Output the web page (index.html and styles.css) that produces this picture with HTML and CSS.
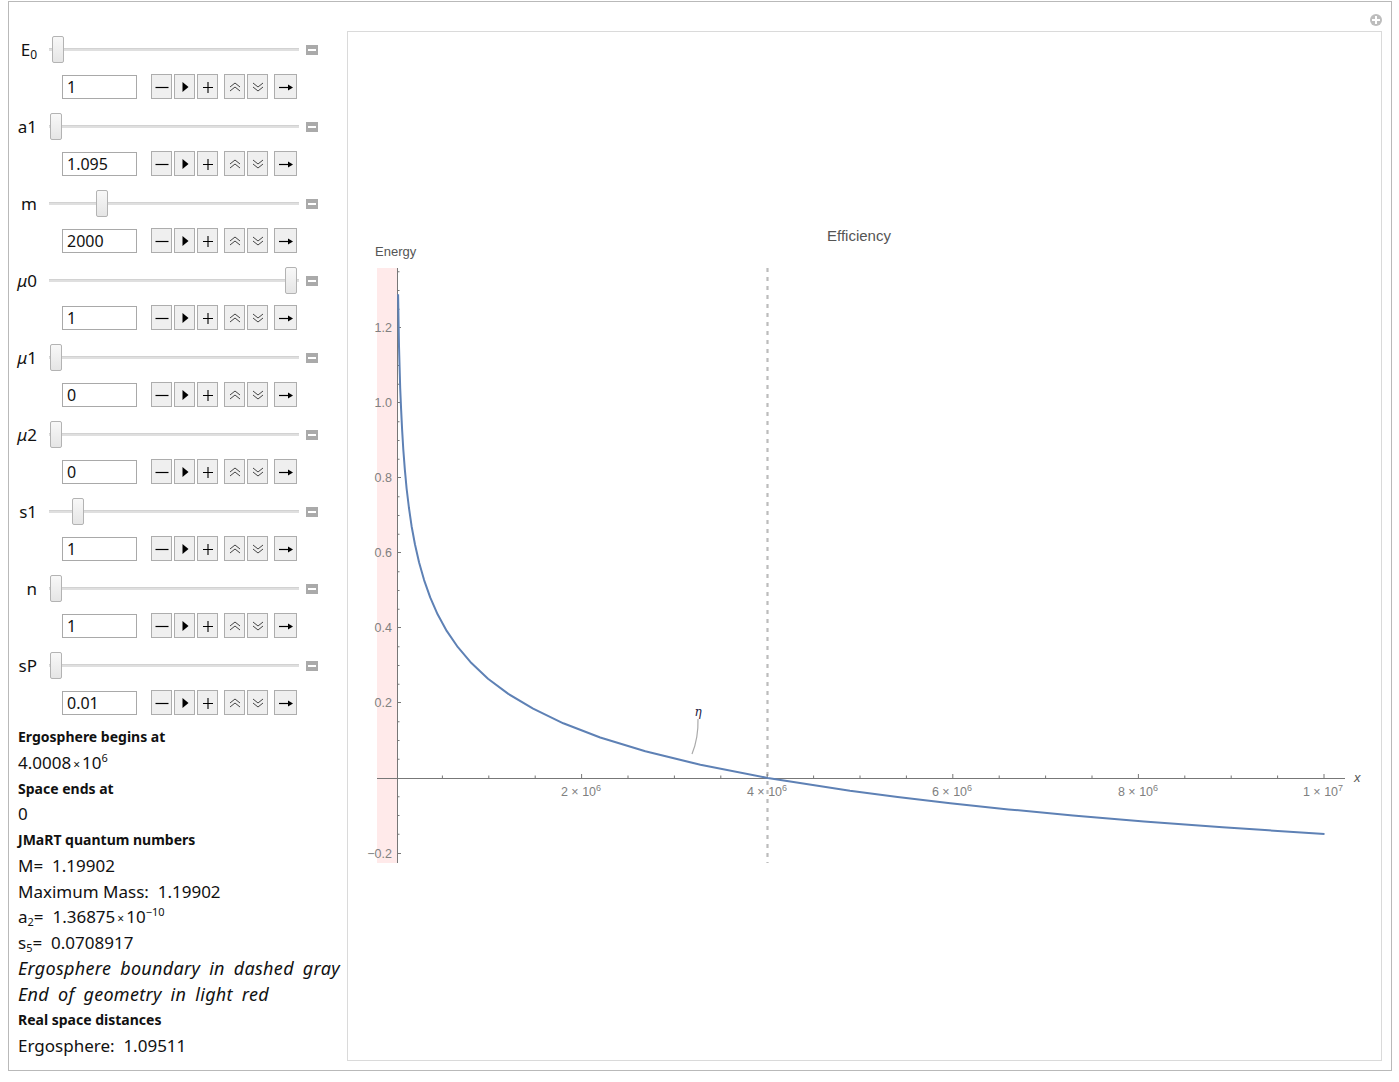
FILE: index.html
```html
<!DOCTYPE html>
<html lang="en">
<head>
  <meta charset="UTF-8" />
  <title>JMaRT Efficiency</title>
  <link rel="stylesheet" href="styles.css">
</head>
<body>
  <!-- button glyphs, drawn once and reused -->
  <svg class="defs" width="0" height="0">
    <symbol id="ic-minus" viewBox="0 0 14 14"><path d="M0.5 7.5h13" stroke="#000" stroke-width="1.2"/></symbol>
    <symbol id="ic-play" viewBox="0 0 14 14"><path d="M4.5 2l6 5-6 5z" fill="#000"/></symbol>
    <symbol id="ic-plus" viewBox="0 0 14 14"><path d="M2 7.5h10M7 2v11" stroke="#000" stroke-width="1.1"/></symbol>
    <symbol id="ic-up" viewBox="0 0 14 14"><path d="M2 7l5-4 5 4M2 11l5-4 5 4" stroke="#444" stroke-width="1" fill="none"/></symbol>
    <symbol id="ic-down" viewBox="0 0 14 14"><path d="M2 3l5 4 5-4M2 7l5 4 5-4" stroke="#444" stroke-width="1" fill="none"/></symbol>
    <symbol id="ic-arrow" viewBox="0 0 14 14"><path d="M0 7.5h10" stroke="#000" stroke-width="1.2"/><path d="M9 4.5l5 3-5 3z" fill="#000"/></symbol>
  </svg>

  <div class="panel">
    <span class="add-btn"></span>

    <div class="sidebar">
      <div class="control">
        <div class="slider-row">
          <span class="label">E<sub>0</sub></span>
          <div class="track"><span class="thumb" style="left: 3px"></span></div>
          <span class="collapse"></span>
        </div>
        <div class="input-row">
          <span class="field">1</span>
          <div class="btn-group">
            <span class="btn"><svg><use href="#ic-minus"/></svg></span>
            <span class="btn"><svg><use href="#ic-play"/></svg></span>
            <span class="btn"><svg><use href="#ic-plus"/></svg></span>
          </div>
          <div class="btn-group">
            <span class="btn"><svg><use href="#ic-up"/></svg></span>
            <span class="btn"><svg><use href="#ic-down"/></svg></span>
          </div>
          <div class="btn-group">
            <span class="btn wide"><svg><use href="#ic-arrow"/></svg></span>
          </div>
        </div>
      </div>

      <div class="control">
        <div class="slider-row">
          <span class="label">a1</span>
          <div class="track"><span class="thumb" style="left: 1px"></span></div>
          <span class="collapse"></span>
        </div>
        <div class="input-row">
          <span class="field">1.095</span>
          <div class="btn-group">
            <span class="btn"><svg><use href="#ic-minus"/></svg></span>
            <span class="btn"><svg><use href="#ic-play"/></svg></span>
            <span class="btn"><svg><use href="#ic-plus"/></svg></span>
          </div>
          <div class="btn-group">
            <span class="btn"><svg><use href="#ic-up"/></svg></span>
            <span class="btn"><svg><use href="#ic-down"/></svg></span>
          </div>
          <div class="btn-group">
            <span class="btn wide"><svg><use href="#ic-arrow"/></svg></span>
          </div>
        </div>
      </div>

      <div class="control">
        <div class="slider-row">
          <span class="label">m</span>
          <div class="track"><span class="thumb" style="left: 47px"></span></div>
          <span class="collapse"></span>
        </div>
        <div class="input-row">
          <span class="field">2000</span>
          <div class="btn-group">
            <span class="btn"><svg><use href="#ic-minus"/></svg></span>
            <span class="btn"><svg><use href="#ic-play"/></svg></span>
            <span class="btn"><svg><use href="#ic-plus"/></svg></span>
          </div>
          <div class="btn-group">
            <span class="btn"><svg><use href="#ic-up"/></svg></span>
            <span class="btn"><svg><use href="#ic-down"/></svg></span>
          </div>
          <div class="btn-group">
            <span class="btn wide"><svg><use href="#ic-arrow"/></svg></span>
          </div>
        </div>
      </div>

      <div class="control">
        <div class="slider-row">
          <span class="label"><i>μ</i>0</span>
          <div class="track"><span class="thumb" style="left: 236px"></span></div>
          <span class="collapse"></span>
        </div>
        <div class="input-row">
          <span class="field">1</span>
          <div class="btn-group">
            <span class="btn"><svg><use href="#ic-minus"/></svg></span>
            <span class="btn"><svg><use href="#ic-play"/></svg></span>
            <span class="btn"><svg><use href="#ic-plus"/></svg></span>
          </div>
          <div class="btn-group">
            <span class="btn"><svg><use href="#ic-up"/></svg></span>
            <span class="btn"><svg><use href="#ic-down"/></svg></span>
          </div>
          <div class="btn-group">
            <span class="btn wide"><svg><use href="#ic-arrow"/></svg></span>
          </div>
        </div>
      </div>

      <div class="control">
        <div class="slider-row">
          <span class="label"><i>μ</i>1</span>
          <div class="track"><span class="thumb" style="left: 1px"></span></div>
          <span class="collapse"></span>
        </div>
        <div class="input-row">
          <span class="field">0</span>
          <div class="btn-group">
            <span class="btn"><svg><use href="#ic-minus"/></svg></span>
            <span class="btn"><svg><use href="#ic-play"/></svg></span>
            <span class="btn"><svg><use href="#ic-plus"/></svg></span>
          </div>
          <div class="btn-group">
            <span class="btn"><svg><use href="#ic-up"/></svg></span>
            <span class="btn"><svg><use href="#ic-down"/></svg></span>
          </div>
          <div class="btn-group">
            <span class="btn wide"><svg><use href="#ic-arrow"/></svg></span>
          </div>
        </div>
      </div>

      <div class="control">
        <div class="slider-row">
          <span class="label"><i>μ</i>2</span>
          <div class="track"><span class="thumb" style="left: 1px"></span></div>
          <span class="collapse"></span>
        </div>
        <div class="input-row">
          <span class="field">0</span>
          <div class="btn-group">
            <span class="btn"><svg><use href="#ic-minus"/></svg></span>
            <span class="btn"><svg><use href="#ic-play"/></svg></span>
            <span class="btn"><svg><use href="#ic-plus"/></svg></span>
          </div>
          <div class="btn-group">
            <span class="btn"><svg><use href="#ic-up"/></svg></span>
            <span class="btn"><svg><use href="#ic-down"/></svg></span>
          </div>
          <div class="btn-group">
            <span class="btn wide"><svg><use href="#ic-arrow"/></svg></span>
          </div>
        </div>
      </div>

      <div class="control">
        <div class="slider-row">
          <span class="label">s1</span>
          <div class="track"><span class="thumb" style="left: 23px"></span></div>
          <span class="collapse"></span>
        </div>
        <div class="input-row">
          <span class="field">1</span>
          <div class="btn-group">
            <span class="btn"><svg><use href="#ic-minus"/></svg></span>
            <span class="btn"><svg><use href="#ic-play"/></svg></span>
            <span class="btn"><svg><use href="#ic-plus"/></svg></span>
          </div>
          <div class="btn-group">
            <span class="btn"><svg><use href="#ic-up"/></svg></span>
            <span class="btn"><svg><use href="#ic-down"/></svg></span>
          </div>
          <div class="btn-group">
            <span class="btn wide"><svg><use href="#ic-arrow"/></svg></span>
          </div>
        </div>
      </div>

      <div class="control">
        <div class="slider-row">
          <span class="label">n</span>
          <div class="track"><span class="thumb" style="left: 1px"></span></div>
          <span class="collapse"></span>
        </div>
        <div class="input-row">
          <span class="field">1</span>
          <div class="btn-group">
            <span class="btn"><svg><use href="#ic-minus"/></svg></span>
            <span class="btn"><svg><use href="#ic-play"/></svg></span>
            <span class="btn"><svg><use href="#ic-plus"/></svg></span>
          </div>
          <div class="btn-group">
            <span class="btn"><svg><use href="#ic-up"/></svg></span>
            <span class="btn"><svg><use href="#ic-down"/></svg></span>
          </div>
          <div class="btn-group">
            <span class="btn wide"><svg><use href="#ic-arrow"/></svg></span>
          </div>
        </div>
      </div>

      <div class="control">
        <div class="slider-row">
          <span class="label">sP</span>
          <div class="track"><span class="thumb" style="left: 1px"></span></div>
          <span class="collapse"></span>
        </div>
        <div class="input-row">
          <span class="field">0.01</span>
          <div class="btn-group">
            <span class="btn"><svg><use href="#ic-minus"/></svg></span>
            <span class="btn"><svg><use href="#ic-play"/></svg></span>
            <span class="btn"><svg><use href="#ic-plus"/></svg></span>
          </div>
          <div class="btn-group">
            <span class="btn"><svg><use href="#ic-up"/></svg></span>
            <span class="btn"><svg><use href="#ic-down"/></svg></span>
          </div>
          <div class="btn-group">
            <span class="btn wide"><svg><use href="#ic-arrow"/></svg></span>
          </div>
        </div>
      </div>

      <div class="readout">
        <div class="head">Ergosphere begins at</div>
        <div class="val">4.0008<span class="times">×</span>10<sup>6</sup></div>
        <div class="head">Space ends at</div>
        <div class="val">0</div>
        <div class="head">JMaRT quantum numbers</div>
        <div class="val">M=&nbsp; 1.19902</div>
        <div class="val">Maximum Mass:&nbsp; 1.19902</div>
        <div class="val">a<sub>2</sub>=&nbsp; 1.36875<span class="times">×</span>10<sup>−10</sup></div>
        <div class="val">s<sub>5</sub>=&nbsp; 0.0708917</div>
        <div class="note">Ergosphere boundary in dashed gray</div>
        <div class="note">End of geometry in light red</div>
        <div class="head">Real space distances</div>
        <div class="val">Ergosphere:&nbsp; 1.09511</div>
      </div>
    </div>

    <div class="plot">
      <!-- viewBox uses page coordinates: x axis 1e6 = 92.8px from x=396.5, y axis 1.0 = 375px from y=778 -->
      <svg width="1033" height="1028" viewBox="348 32 1033 1028">
        <rect x="377" y="268" width="20" height="595" fill="#ffeaea"/>
        <line x1="767.5" y1="268" x2="767.5" y2="863" stroke="#bcbcbc" stroke-width="2.2" stroke-dasharray="4 5"/>

        <g stroke="#777" stroke-width="1" fill="none">
          <path d="M377 778.5H1345"/>
          <path d="M397.5 268V863"/>
          <!-- y ticks -->
          <path d="M397 327.5h4M397 402.5h4M397 477.5h4M397 552.5h4M397 627.5h4M397 702.5h4M397 853.5h4"/>
          <path d="M397 271.75h2.5M397 290.5h2.5M397 309.25h2.5M397 346.75h2.5M397 365.5h2.5M397 384.25h2.5M397 421.75h2.5M397 440.5h2.5M397 459.25h2.5M397 496.75h2.5M397 515.5h2.5M397 534.25h2.5M397 571.75h2.5M397 590.5h2.5M397 609.25h2.5M397 646.75h2.5M397 665.5h2.5M397 684.25h2.5M397 721.75h2.5M397 740.5h2.5M397 759.25h2.5M397 796.75h2.5M397 815.5h2.5M397 834.25h2.5"/>
          <!-- x ticks -->
          <path d="M581.6 778v-4M767.2 778v-4M952.8 778v-4M1138.4 778v-4M1324 778v-4"/>
          <path d="M442.4 778v-2.5M488.8 778v-2.5M535.2 778v-2.5M628 778v-2.5M674.4 778v-2.5M720.8 778v-2.5M813.6 778v-2.5M860 778v-2.5M906.4 778v-2.5M999.2 778v-2.5M1045.6 778v-2.5M1092 778v-2.5M1184.8 778v-2.5M1231.2 778v-2.5M1277.6 778v-2.5"/>
        </g>

        <!-- efficiency curve, sampled along u = ln(4e6 / x) -->
        <path class="curve" d="M398.1 294.3L398.6 324.2L399 345.9L399.6 367.3L400.2 388.4L401.1 409.1L402.1 429.5L403.3 449.5L404.8 469.2L406.6 488.5L408.9 507.5L411.6 526.2L415 544.5L419.1 562.5L424.1 580.1L430.2 597.4L437.6 614.3L446.7 630.9L457.9 647.2L471.4 663.1L488 678.7L508.3 693.9L533.1 708.7L563.3 723.3L600.2 737.5L645.3 751.3L700.4 764.8L767.7 778L849.9 790.8L897.6 797.1L950.3 803.3L1008.5 809.4L1072.9 815.4L1144 821.4L1222.6 827.2L1264.8 830.1L1324.5 833.9"/>

        <path d="M698 719Q698.5 738 692 754" stroke="#aaa" stroke-width="1.2" fill="none"/>
        <text class="eta" x="698" y="716" text-anchor="middle">η</text>

        <g class="ticks">
          <text x="392" y="331.5" text-anchor="end">1.2</text>
          <text x="392" y="406.5" text-anchor="end">1.0</text>
          <text x="392" y="481.5" text-anchor="end">0.8</text>
          <text x="392" y="556.5" text-anchor="end">0.6</text>
          <text x="392" y="631.5" text-anchor="end">0.4</text>
          <text x="392" y="706.5" text-anchor="end">0.2</text>
          <text x="392" y="857.5" text-anchor="end">−0.2</text>

          <text x="581" y="796" text-anchor="middle">2 × 10<tspan class="exp" dy="-5">6</tspan></text>
          <text x="767" y="796" text-anchor="middle">4 × 10<tspan class="exp" dy="-5">6</tspan></text>
          <text x="952" y="796" text-anchor="middle">6 × 10<tspan class="exp" dy="-5">6</tspan></text>
          <text x="1138" y="796" text-anchor="middle">8 × 10<tspan class="exp" dy="-5">6</tspan></text>
          <text x="1323" y="796" text-anchor="middle">1 × 10<tspan class="exp" dy="-5">7</tspan></text>
        </g>

        <text class="axis-label" x="1354" y="782"><tspan font-style="italic">x</tspan></text>
        <text class="axis-label" x="375" y="256">Energy</text>
        <text class="title" x="859" y="241" text-anchor="middle">Efficiency</text>
      </svg>
    </div>
  </div>
</body>
</html>
```

FILE: styles.css
```css
body {
  margin: 0;
  background: #fff;
}

.defs {
  position: absolute;
}

.panel {
  position: relative;
  display: flex;
  box-sizing: border-box;
  width: 1384px;
  height: 1070px;
  margin: 1px 0 0 8px;
  padding: 29px 9px 9px 0;
  border: 1px solid #b9b9b9;
  font-family: "Noto Sans", sans-serif;
  color: #111;
}

/* round "+" in the top right corner */
.add-btn {
  position: absolute;
  top: 12px;
  right: 9px;
  width: 12px;
  height: 12px;
  border-radius: 50%;
  background: #bdbdbd;
  display: flex;
  align-items: center;
  justify-content: center;
}

.add-btn::before,
.add-btn::after {
  content: "";
  position: absolute;
  background: #fff;
  width: 8px;
  height: 2px;
}

.add-btn::after {
  width: 2px;
  height: 8px;
}

.sidebar {
  width: 338px;
  padding-top: 5px;
}

.control + .control {
  margin-top: 14px;
}

.slider-row {
  display: flex;
  align-items: center;
  height: 27px;
  margin-bottom: 11px;
}

.label {
  width: 28px;
  text-align: right;
  font-size: 17px;
  line-height: 27px;
}

.label sub {
  font-size: 12px;
  line-height: 0;
  vertical-align: -3px;
}

.track {
  position: relative;
  width: 250px;
  height: 27px;
  margin-left: 12px;
}

.track::before {
  content: "";
  position: absolute;
  left: 0;
  right: 0;
  top: 12px;
  height: 3px;
  background: #dfdfdf;
  border-top: 1px solid #d2d2d2;
  box-sizing: border-box;
}

.thumb {
  position: absolute;
  top: 0;
  width: 12px;
  height: 27px;
  box-sizing: border-box;
  border: 1px solid #b3b3b3;
  border-radius: 2px;
  background: linear-gradient(#f8f8f8, #e5e5e5);
}

.collapse {
  width: 12px;
  height: 10px;
  margin-left: 7px;
  background: #aaa;
  display: flex;
  align-items: center;
  justify-content: center;
}

.collapse::before {
  content: "";
  width: 8px;
  height: 2px;
  background: #fff;
}

.input-row {
  display: flex;
  align-items: center;
  height: 25px;
  padding-left: 53px;
}

.field {
  box-sizing: border-box;
  width: 75px;
  height: 24px;
  border: 1px solid #a9a9a9;
  padding-left: 4px;
  font-size: 16px;
  line-height: 22px;
}

.btn-group {
  display: flex;
  gap: 2px;
  margin-left: 14px;
}

.btn-group + .btn-group {
  margin-left: 6px;
}

.btn {
  box-sizing: border-box;
  width: 21px;
  height: 25px;
  border: 1px solid #adadad;
  background: #efefef;
  display: flex;
  align-items: center;
  justify-content: center;
}

.btn.wide {
  width: 23px;
}

.btn svg {
  width: 14px;
  height: 14px;
}

.readout {
  margin-top: 9px;
  padding-left: 9px;
}

.readout div {
  height: 25.75px;
  line-height: 25.75px;
  white-space: nowrap;
}

.head {
  font-size: 14px;
  font-weight: 700;
}

.val {
  font-size: 17px;
}

.note {
  font-size: 18px;
  font-style: italic;
  letter-spacing: 0.3px;
  word-spacing: 4px;
}

.readout sup,
.readout sub {
  font-size: 11px;
  line-height: 0;
}

.readout sup {
  vertical-align: 7px;
}

.readout sub {
  vertical-align: -3px;
}

.times {
  font-size: 12px;
  margin: 0 2px;
}

.plot {
  box-sizing: border-box;
  width: 1035px;
  height: 1030px;
  border: 1px solid #dadada;
}

.plot svg {
  display: block;
}

.curve {
  fill: none;
  stroke: #5e81b5;
  stroke-width: 2;
  stroke-linejoin: round;
}

.ticks text {
  font-family: "Liberation Sans", Arial, sans-serif;
  font-size: 12.5px;
  fill: #808080;
}

.ticks .exp {
  font-size: 9px;
}

.axis-label {
  font-family: "Liberation Sans", Arial, sans-serif;
  font-size: 13px;
  fill: #555;
}

.title {
  font-family: "Liberation Sans", Arial, sans-serif;
  font-size: 15px;
  fill: #555;
}

.eta {
  font-family: "DejaVu Serif", serif;
  font-style: italic;
  font-size: 12px;
  fill: #1c1c44;
}
```
